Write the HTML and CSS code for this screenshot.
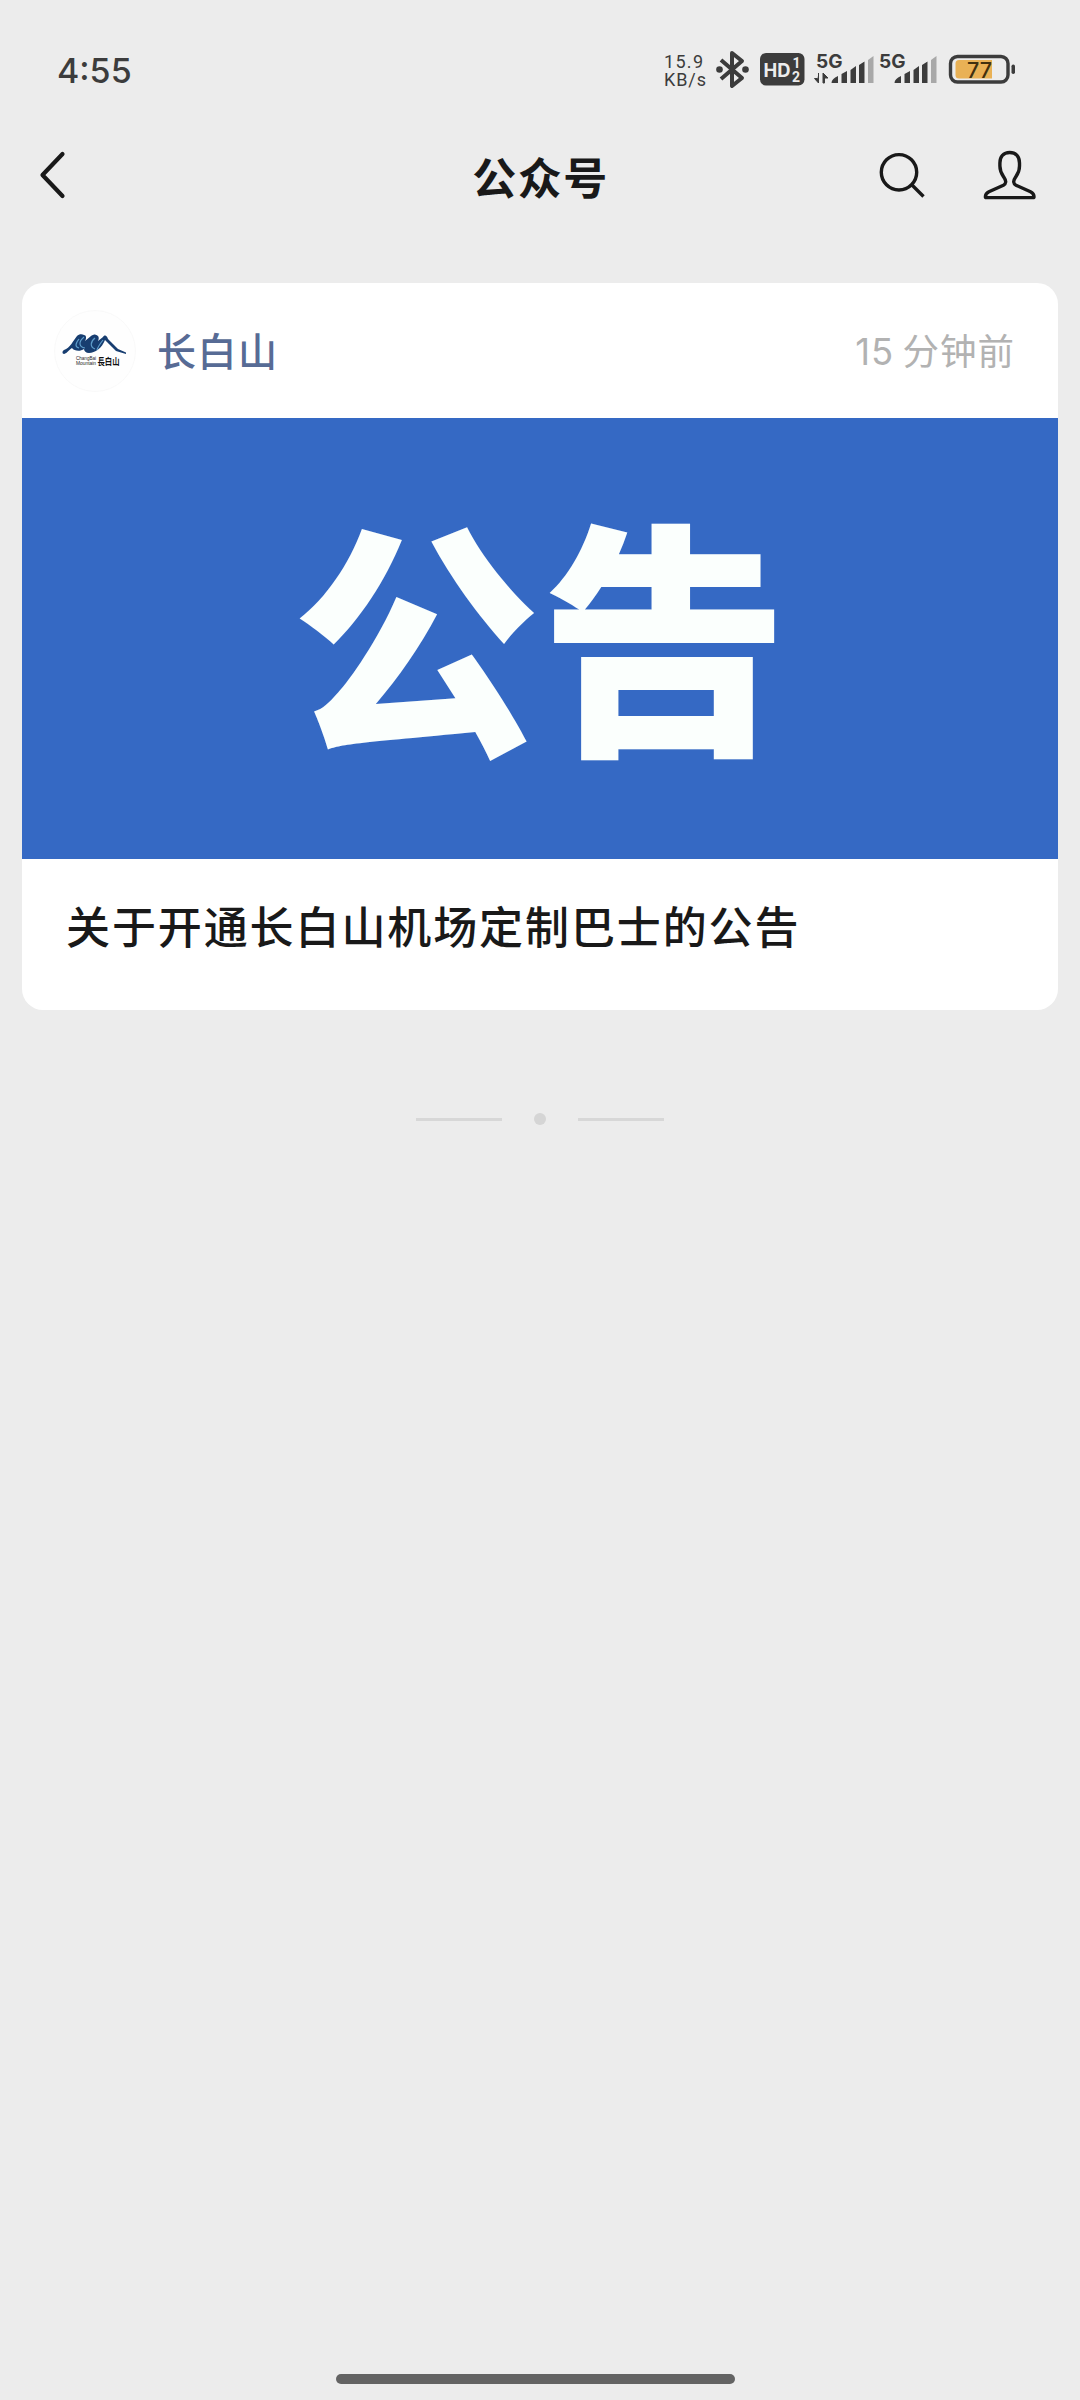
FILE: index.html
```html
<!DOCTYPE html>
<html lang="zh-CN">
<head>
<meta charset="utf-8">
<title>公众号</title>
<link rel="stylesheet" href="styles.css">
</head>
<body>
<div class="screen">
  <header class="status">
    <span class="clock">4:55</span>
    <svg class="indicators" width="360" height="44" viewBox="660 48 360 44" fill="#3c3c3c">
      <text class="rate" x="664" y="67.500" textLength="39">15.9</text>
      <text class="rate" x="664" y="86" textLength="42">KB/s</text>
      <path d="M721 60 742 78 732 86V53L742 61 721 79" fill="none" stroke="#3c3c3c" stroke-width="4" stroke-linejoin="round"/>
      <circle cx="719.5" cy="69.500" r="3.300"/><circle cx="745.500" cy="69.500" r="3.300"/>
      <rect x="760" y="53" width="44.500" height="32.500" rx="6"/>
      <text class="hd" x="763.500" y="76.500" textLength="27" lengthAdjust="spacingAndGlyphs">HD</text>
      <text class="sim" x="792.500" y="68">1</text>
      <text class="sim" x="792" y="81.500">2</text>
      <text class="net" x="816" y="68" textLength="26.500" lengthAdjust="spacingAndGlyphs">5G</text>
      <path d="M818.500 73v10l-4-4.500h3M823 83V73l5 5h-3.500v5z" stroke="#3c3c3c"/>
      <path d="M831.500 83q0-4 6.500-7v7zM841.500 83v-9l5.500-3v12zM850.500 83V70l5.500-4v17zM859 83V65l5.500-3.500V83z"/>
      <path d="M868 83V60l5.500-4v27z" fill="#a8a8a8"/>
      <text class="net" x="879" y="68" textLength="26.500" lengthAdjust="spacingAndGlyphs">5G</text>
      <path d="M894.500 83q0-4 6.500-7v7zM904.500 83v-9l5.500-3v12zM913.500 83V70l5.500-4v17zM922 83V65l5.500-3.500V83z"/>
      <path d="M931 83V60l5.500-4v27z" fill="#a8a8a8"/>
      <rect x="950.500" y="56.500" width="57.500" height="25.500" rx="7" fill="none" stroke="#3c3c3c" stroke-width="3.400"/>
      <path d="M992 60v18.500h-33q-3.500 0-3.500-3.500V63.500q0-3.500 3.500-3.500z" fill="#e9b155"/>
      <rect x="1011.500" y="64.500" width="3.500" height="9.500" rx="1.700"/>
      <text class="level" x="967" y="77.500" textLength="25" lengthAdjust="spacingAndGlyphs">77</text>
    </svg>
  </header>
  <nav class="nav">
    <svg class="back" width="28" height="50" viewBox="38 150 28 50"><path d="M62.500 154 42.500 175l20 21"/></svg>
    <h1 class="title">公众号</h1>
    <div class="tools">
      <svg width="46" height="52" viewBox="879 149 46 52"><circle cx="899" cy="172.300" r="17.700"/><path d="m911.500 184.500 12 12"/></svg>
      <svg width="56" height="52" viewBox="982 149 56 52"><path d="M1009.700 152.500c6.300 0 9.800 4.500 9.800 10.500v3c0 4.500-1.500 7.500-3.500 10.500-1.700 2.500-2.500 3.500-2.300 5.500.1 1.500 1 2.500 2.300 3.200l14.500 6.600c3 1.500 3.500 3 3.500 4.900 0 .7-.3.900-1 .9h-46.600c-.7 0-1-.2-1-.9 0-1.900.5-3.400 3.500-4.900l14.500-6.600c1.300-.7 2.200-1.700 2.300-3.200.2-2-.6-3-2.300-5.500-2-3-3.500-6-3.500-10.500v-3c0-6 3.500-10.500 9.800-10.500z"/></svg>
    </div>
  </nav>
  <main class="card">
    <div class="account">
      <svg class="avatar" width="82" height="82" viewBox="54 310 82 82">
        <circle cx="95" cy="351" r="40.500" fill="#fefefe" stroke="#f7f7f7" stroke-width=".7"/>
        <path d="M64 350c6-2 9-9 13-14 2-2 5-2 7-1 2 0 3 3 1 6l6-5c3-2 5-2 7 0 1 1 1 3 0 5l5-4c2-3 4-1 5 2l10 10 8 3.500v1.500l-10-3-11-11c-3 8-10 13-16 13-3 0-5-2-5-4-4 3-10 2-12-1-3 2-6 6-8 6-2 0-2-3 0-4z" fill="#173d70"/>
        <path d="M79 339c-4 5-4 8 0 9M84 337c-6 5-5 10 1 11M95 338c-5 4-5 9 0 11M103 340c-4 5-5 7-6 10" fill="none" stroke="#5e9cca" stroke-width="1.200"/>
        <text class="logo-en" x="76" y="360" textLength="20" lengthAdjust="spacingAndGlyphs">ChangBai</text>
        <text class="logo-en" x="76" y="364.500" textLength="20" lengthAdjust="spacingAndGlyphs">Mountain</text>
        <text class="logo-cn" x="97.500" y="365" textLength="22" lengthAdjust="spacingAndGlyphs">長白山</text>
      </svg>
      <span class="name">长白山</span>
      <time class="ago">15 分钟前</time>
    </div>
    <div class="banner"><span>公告</span></div>
    <h2 class="headline">关于开通长白山机场定制巴士的公告</h2>
  </main>
  <div class="divider"><i class="line"></i><i class="dot"></i><i class="line"></i></div>
  <div class="home"></div>
</div>
</body>
</html>
```
FILE: styles.css
```css
* { box-sizing: border-box; }
body {
  margin: 0;
  background: #ececec;
  color: #191919;
  font-family: "Noto Sans CJK SC", "Noto Sans", sans-serif;
}
h1, h2 { margin: 0; }
.screen { width: 1080px; height: 2400px; display: flex; flex-direction: column; }
.status { height: 140px; padding: 48px 60px 0 57px; display: flex; justify-content: space-between; align-items: flex-start; }
.clock { font: 500 34px/46px Inter, sans-serif; color: #3c3c3c; }
.rate { font: 400 18px Roboto, sans-serif; }
.hd { font: 700 18.5px Inter, sans-serif; fill: #ececec; }
.sim { font: 700 14px Roboto, sans-serif; fill: #ececec; }
.net { font: 700 18.5px Inter, sans-serif; }
.level { font: 500 21.5px Inter, sans-serif; fill: #40300f; }
.logo-en { font: 500 5px "Liberation Sans", sans-serif; fill: #222; }
.logo-cn { font: 700 9.5px "Noto Sans CJK TC", sans-serif; fill: #111; }
.nav { height: 143px; padding: 9px 42px 0 38px; display: grid; grid-template-columns: 1fr auto 1fr; align-items: start; }
.nav svg { fill: none; stroke: #191919; stroke-width: 3.4; stroke-linejoin: round; display: block; }
.nav .back { stroke-width: 4.2; stroke-linecap: round; margin-top: 1px; }
.title { padding-left: 5px; font-size: 44px; line-height: 54px; font-weight: 700; letter-spacing: 1.5px; }
.tools { display: flex; gap: 57px; justify-content: flex-end; }
.card { width: 1036px; height: 727px; margin: 0 22px; background: #fff; border-radius: 21px; overflow: hidden; }
.account { height: 135px; padding: 0 43px 0 32px; display: flex; align-items: center; }
.name { margin-left: 21px; padding-bottom: 3px; font-size: 39px; font-weight: 500; letter-spacing: 1.5px; color: #576b95; }
.ago { margin-left: auto; padding-bottom: 3px; font-family: Inter, "Noto Sans CJK SC", sans-serif; font-size: 36.5px; letter-spacing: 1px; word-spacing: -3px; color: #b2b2b2; }
.banner { height: 441px; padding-bottom: 22px; background: #3569c4; color: #fbfffd; display: flex; align-items: center; justify-content: center; font-size: 248px; font-weight: 900; line-height: 1; }
.headline { padding: 32px 44px; font-size: 44px; line-height: 68px; font-weight: 500; letter-spacing: 1.9px; white-space: nowrap; }
.divider { margin-top: 103px; display: flex; align-items: center; justify-content: center; gap: 32px; height: 12px; }
.line { width: 86px; height: 3px; background: #d7d7d7; }
.dot { width: 12px; height: 12px; border-radius: 50%; background: #d5d5d5; }
.home { width: 399px; height: 10px; margin: auto auto 16px 336px; border-radius: 5px; background: #636363; }
```
